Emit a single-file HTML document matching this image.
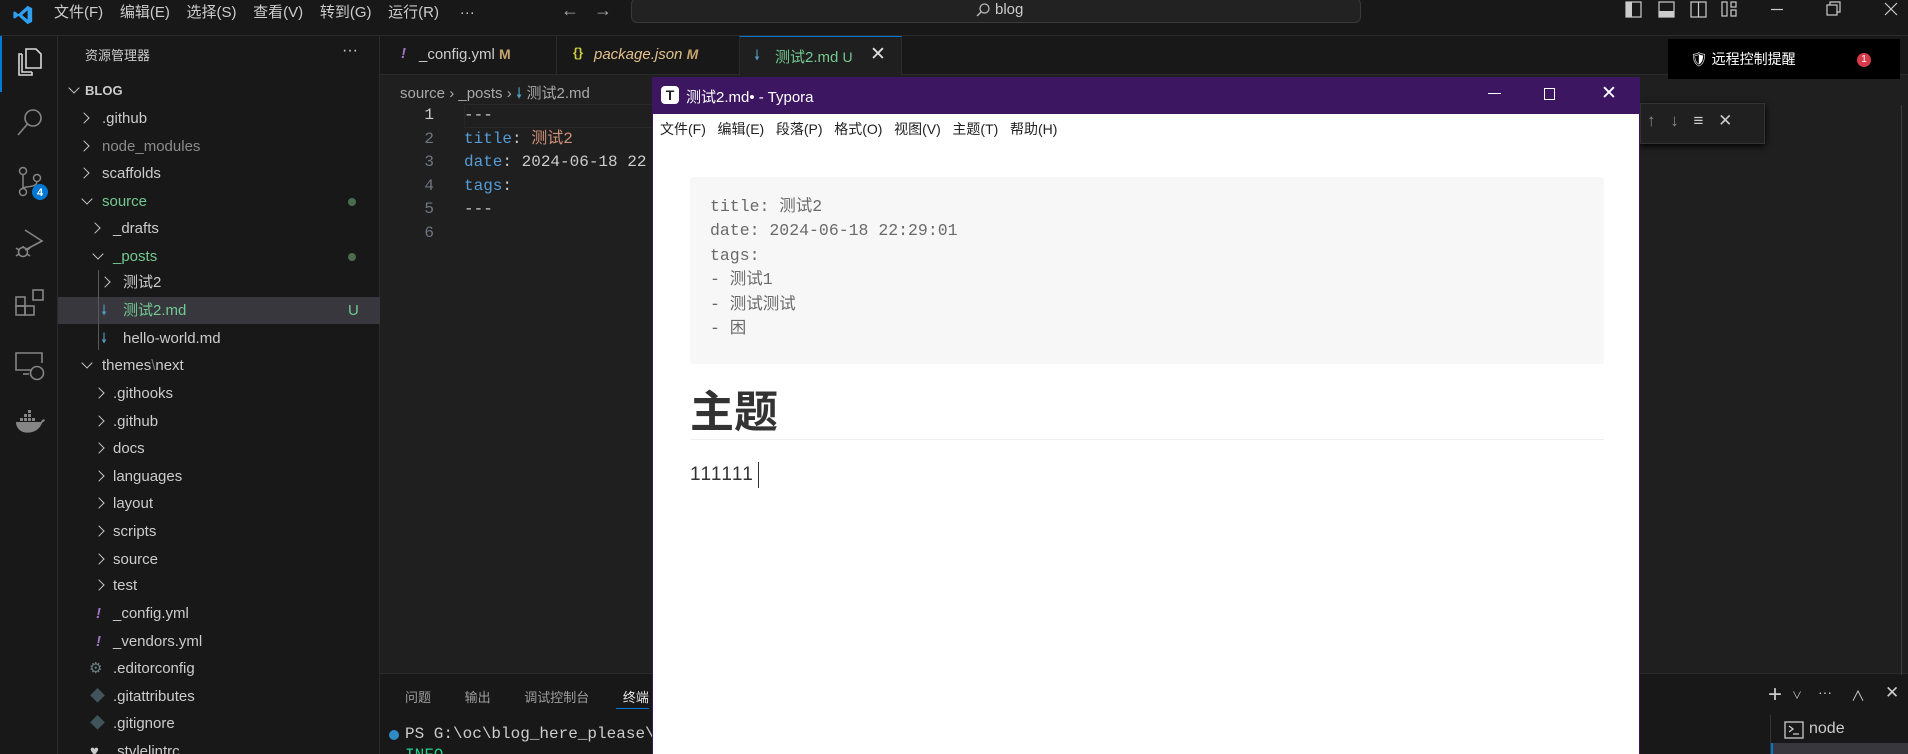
<!DOCTYPE html>
<html><head><meta charset="utf-8"><style>
*{margin:0;padding:0;box-sizing:border-box}
html,body{width:1908px;height:754px;overflow:hidden}
body{background:#1f1f1f;font-family:"Liberation Sans","Noto Sans CJK SC",sans-serif;color:#ccc;position:relative}
.a{position:absolute;white-space:nowrap}
.mono{font-family:"Liberation Mono","Noto Sans CJK SC",monospace}
.row{position:absolute;left:58px;width:322px;height:27px;font-size:15px;line-height:27px;color:#ccc}
.row span{position:absolute}
.row span.r{top:9px;width:8px;height:8px;border-right:1.3px solid #c5c5c5;border-bottom:1.3px solid #c5c5c5;transform:rotate(-45deg)}
.row span.d{top:7px;width:8px;height:8px;border-right:1.3px solid #c5c5c5;border-bottom:1.3px solid #c5c5c5;transform:rotate(45deg)}
svg{position:absolute}
</style></head><body>
<!-- title bar -->
<div class="a" style="left:0;top:0;width:1908px;height:36px;background:#181818;border-bottom:1px solid #2b2b2b"></div>
<svg style="left:12px;top:4px" width="22" height="22" viewBox="0 0 24 24"><path d="M17 2 L22 4.5 V19.5 L17 22 L7 13 L3 16 L1.5 15 V9 L3 8 L7 11 L17 2Z M17 7 L11 12 L17 17Z" fill="#2f9ff0" fill-rule="evenodd"/></svg>
<div class="a" style="left:54px;top:2px;font-size:15px;line-height:22px;color:#ccc">文件(F)&nbsp;&nbsp;&nbsp; 编辑(E)&nbsp;&nbsp;&nbsp; 选择(S)&nbsp;&nbsp;&nbsp; 查看(V)&nbsp;&nbsp;&nbsp; 转到(G)&nbsp;&nbsp;&nbsp; 运行(R)&nbsp;&nbsp;&nbsp;&nbsp; ···</div>
<div class="a" style="left:561px;top:0px;font-size:18px;color:#aaa">←&nbsp;&nbsp; →</div>
<div class="a" style="left:631px;top:-2px;width:730px;height:25px;background:#222;border:1px solid #3a3a3a;border-radius:6px"></div>
<svg style="left:975px;top:2px" width="16" height="16" viewBox="0 0 16 16"><circle cx="9.5" cy="6.5" r="4.5" fill="none" stroke="#bbb" stroke-width="1.3"/><path d="M6.3 9.7 L2 14" stroke="#bbb" stroke-width="1.4"/></svg>
<div class="a" style="left:995px;top:1px;font-size:15px;color:#ccc">blog</div>
<svg style="left:1625px;top:0" width="283" height="24" viewBox="0 0 283 24"><g fill="none" stroke="#ccc" stroke-width="1.2"><rect x="1" y="2" width="15" height="15"/><rect x="34" y="2" width="15" height="15"/><rect x="66" y="2" width="15" height="15"/><path d="M73.5 2V17"/><rect x="97" y="2" width="5" height="14"/><rect x="106" y="2" width="5" height="5"/><rect x="106" y="10" width="5" height="6"/><path d="M146 9.5H158"/><rect x="202" y="5" width="10" height="10"/><path d="M205 5V2H215V12H212"/><path d="M260 3L272 15M272 3L260 15"/></g><rect x="1" y="2" width="6" height="15" fill="#ccc"/><rect x="34" y="11" width="15" height="6" fill="#ccc"/></svg>
<!-- activity bar -->
<div class="a" style="left:0;top:36px;width:58px;height:718px;background:#181818;border-right:1px solid #2b2b2b"></div>
<div class="a" style="left:0;top:36px;width:2px;height:56px;background:#0078d4"></div>
<svg style="left:15px;top:46px" width="30" height="32" viewBox="0 0 30 32"><g fill="none" stroke="#d7d7d7" stroke-width="1.6"><path d="M11 3H21L26 8V22H11Z"/><path d="M7 8H4V29H17V26"/><path d="M7 8V26H17"/></g></svg>
<svg style="left:15px;top:106px" width="30" height="32" viewBox="0 0 30 32"><g fill="none" stroke="#858585" stroke-width="1.6"><circle cx="18" cy="12" r="8"/><path d="M12.5 18L3 29"/></g></svg>
<svg style="left:15px;top:166px" width="40" height="36" viewBox="0 0 40 36"><g fill="none" stroke="#858585" stroke-width="1.5"><circle cx="8" cy="5" r="3.5"/><circle cx="8" cy="26" r="3.5"/><circle cx="22" cy="12" r="3.5"/><path d="M8 8.5V22.5M22 15.5C22 22 10 20 8 22"/></g><circle cx="25" cy="26" r="8" fill="#0078d4"/><text x="25" y="30" font-size="11" font-weight="bold" fill="#fff" text-anchor="middle" font-family="Liberation Sans">4</text></svg>
<svg style="left:13px;top:228px" width="34" height="32" viewBox="0 0 34 32"><g fill="none" stroke="#858585" stroke-width="1.6"><path d="M12 2L29 13L12 22"/><circle cx="10" cy="24" r="4.5"/><path d="M3 20L6 22M3 28L6 26M17 20L14 22M17 28L14 26M10 19.5V18"/></g></svg>
<svg style="left:14px;top:288px" width="32" height="32" viewBox="0 0 32 32"><g fill="none" stroke="#858585" stroke-width="1.6"><rect x="2" y="9" width="9" height="9"/><rect x="2" y="18" width="9" height="9"/><rect x="11" y="18" width="9" height="9"/><rect x="19" y="2" width="10" height="10"/></g></svg>
<svg style="left:14px;top:350px" width="32" height="32" viewBox="0 0 32 32"><g fill="none" stroke="#858585" stroke-width="1.6"><path d="M18 20H2V3H28V13"/><path d="M9 24H15"/><circle cx="23" cy="23" r="6.5"/></g></svg>
<svg style="left:14px;top:410px" width="32" height="26" viewBox="0 0 32 26"><path d="M2 12H27C28 9 30 9 31 10C30 12 29 12 28 13C25 21 17 24 9 22C4 20 2 16 2 12Z" fill="#858585"/><g fill="#858585"><rect x="6" y="8" width="3" height="3"/><rect x="10" y="8" width="3" height="3"/><rect x="14" y="8" width="3" height="3"/><rect x="10" y="4" width="3" height="3"/><rect x="14" y="4" width="3" height="3"/><rect x="14" y="0" width="3" height="3"/><rect x="18" y="8" width="3" height="3"/></g></svg>
<!-- sidebar -->
<div class="a" style="left:58px;top:36px;width:322px;height:718px;background:#181818;border-right:1px solid #2b2b2b"></div>
<div class="a" style="left:85px;top:45px;font-size:13px;color:#ccc">资源管理器</div>
<div class="a" style="left:342px;top:42px;font-size:16px;color:#ccc">···</div>
<div class="a" style="left:58px;top:297px;width:322px;height:27px;background:#37373d"></div>
<div class="a" style="left:98px;top:270px;width:1px;height:80px;background:#585858"></div>
<div class="row" style="top:77px"><span class="d" style="left:12px"></span><span style="left:27px;font-weight:bold;font-size:13px">BLOG</span></div>
<div class="row" style="top:105px"><span class="r" style="left:22px"></span><span style="left:44px">.github</span></div>
<div class="row" style="top:133px;color:#8c8c8c"><span class="r" style="left:22px"></span><span style="left:44px">node_modules</span></div>
<div class="row" style="top:160px"><span class="r" style="left:22px"></span><span style="left:44px">scaffolds</span></div>
<div class="row" style="top:188px;color:#73c991"><span class="d" style="left:25px"></span><span style="left:44px">source</span><span style="left:290px;top:10px;width:8px;height:8px;border-radius:4px;background:#4b6d4f"></span></div>
<div class="row" style="top:215px"><span class="r" style="left:33px"></span><span style="left:55px">_drafts</span></div>
<div class="row" style="top:243px;color:#73c991"><span class="d" style="left:36px"></span><span style="left:55px">_posts</span><span style="left:290px;top:10px;width:8px;height:8px;border-radius:4px;background:#4b6d4f"></span></div>
<div class="row" style="top:269px"><span class="r" style="left:43px"></span><span style="left:65px">测试2</span></div>
<div class="row" style="top:297px;color:#73c991"><span style="left:43px;color:#519aba;font-size:14px">🠗</span><span style="left:65px">测试2.md</span><span style="left:290px">U</span></div>
<div class="row" style="top:325px"><span style="left:43px;color:#519aba;font-size:14px">🠗</span><span style="left:65px">hello-world.md</span></div>
<div class="row" style="top:352px"><span class="d" style="left:25px"></span><span style="left:44px">themes<span style="position:static;color:#777">\</span>next</span></div>
<div class="row" style="top:380px"><span class="r" style="left:37px"></span><span style="left:55px">.githooks</span></div>
<div class="row" style="top:408px"><span class="r" style="left:37px"></span><span style="left:55px">.github</span></div>
<div class="row" style="top:435px"><span class="r" style="left:37px"></span><span style="left:55px">docs</span></div>
<div class="row" style="top:463px"><span class="r" style="left:37px"></span><span style="left:55px">languages</span></div>
<div class="row" style="top:490px"><span class="r" style="left:37px"></span><span style="left:55px">layout</span></div>
<div class="row" style="top:518px"><span class="r" style="left:37px"></span><span style="left:55px">scripts</span></div>
<div class="row" style="top:546px"><span class="r" style="left:37px"></span><span style="left:55px">source</span></div>
<div class="row" style="top:572px"><span class="r" style="left:37px"></span><span style="left:55px">test</span></div>
<div class="row" style="top:600px"><span style="left:38px;color:#a074c4;font-weight:bold;font-style:italic">!</span><span style="left:55px">_config.yml</span></div>
<div class="row" style="top:628px"><span style="left:38px;color:#a074c4;font-weight:bold;font-style:italic">!</span><span style="left:55px">_vendors.yml</span></div>
<div class="row" style="top:655px"><span style="left:31px;color:#6d8086">⚙</span><span style="left:55px">.editorconfig</span></div>
<div class="row" style="top:683px"><span style="left:32px;color:#41535b">◆</span><span style="left:55px">.gitattributes</span></div>
<div class="row" style="top:710px"><span style="left:32px;color:#41535b">◆</span><span style="left:55px">.gitignore</span></div>
<div class="row" style="top:738px"><span style="left:32px;color:#ccc">♥</span><span style="left:55px">.stylelintrc</span></div>
<!-- tabs -->
<div class="a" style="left:380px;top:36px;width:1528px;height:39px;background:#181818;border-bottom:1px solid #2b2b2b"></div>
<div class="a" style="left:556px;top:36px;width:1px;height:39px;background:#2b2b2b"></div>
<div class="a" style="left:739px;top:36px;width:163px;height:40px;background:#1f1f1f;border-top:1px solid #0078d4;border-left:1px solid #2b2b2b;border-right:1px solid #2b2b2b"></div>
<div class="a" style="left:401px;top:45px;font-size:15px;color:#a074c4;font-weight:bold;font-style:italic">!</div>
<div class="a" style="left:419px;top:46px;font-size:15px;color:#ccc">_config.yml <b style="color:#c5a46e;font-size:14px">M</b></div>
<div class="a" style="left:573px;top:45px;font-size:13px;color:#cbcb41;font-weight:bold">{}</div>
<div class="a" style="left:594px;top:46px;font-size:15px;color:#e2c08d;font-style:italic">package.json <b style="font-size:14px;color:#c5a46e">M</b></div>
<div class="a" style="left:754px;top:45px;font-size:14px;color:#519aba">🠗</div>
<div class="a" style="left:775px;top:46px;font-size:15px;color:#73c991">测试2.md <b style="font-weight:normal;font-size:14px">U</b></div>
<div class="a" style="left:870px;top:43px;font-size:19px;color:#ddd">✕</div>
<!-- breadcrumb & editor -->
<div class="a" style="left:400px;top:82px;font-size:15px;color:#a9a9a9">source › _posts › <span style="color:#519aba">🠗</span> 测试2.md</div>
<div class="a" style="left:464px;top:104px;width:200px;height:24px;border:1px solid #282828"></div>
<div class="a mono" style="left:420px;top:104px;font-size:16px;line-height:23.5px;color:#6e7681;text-align:right;width:14px"><span style="color:#ccc">1</span><br>2<br>3<br>4<br>5<br>6</div>
<div class="a mono" style="left:464px;top:104px;font-size:16px;line-height:23.5px;color:#ccc">---<br><span style="color:#569cd6">title</span>: <span style="color:#ce9178">测试2</span><br><span style="color:#569cd6">date</span>: 2024-06-18 22<br><span style="color:#569cd6">tags</span>:<br>---</div>
<!-- panel -->
<div class="a" style="left:380px;top:673px;width:1528px;height:81px;background:#181818;border-top:1px solid #2b2b2b"></div>
<div class="a" style="left:405px;top:687px;font-size:13px;color:#9d9d9d;word-spacing:30px">问题 输出 调试控制台 <span style="color:#e7e7e7">终端</span></div>
<div class="a" style="left:616px;top:708px;width:33px;height:1px;background:#0078d4"></div>
<div class="a" style="left:389px;top:730px;width:10px;height:10px;border-radius:5px;background:#2f8ac5"></div>
<div class="a mono" style="left:405px;top:725px;font-size:16px;color:#ccc">PS G:\oc\blog_here_please\</div>
<div class="a mono" style="left:405px;top:746px;font-size:16px;color:#23d18b">INFO</div>
<div class="a" style="left:1768px;top:681px;font-size:24px;color:#ccc">+</div>
<div class="a" style="left:1792px;top:687px;font-size:10px;color:#ccc">∨</div>
<div class="a" style="left:1818px;top:684px;font-size:14px;color:#ccc">···</div>
<div class="a" style="left:1851px;top:686px;font-size:14px;color:#ccc">∧</div>
<div class="a" style="left:1885px;top:683px;font-size:17px;color:#ccc">✕</div>
<div class="a" style="left:1770px;top:715px;width:1px;height:39px;background:#333"></div>
<div class="a" style="left:1771px;top:743px;width:137px;height:11px;background:#37373d;border-left:2px solid #0078d4"></div>
<svg style="left:1784px;top:721px" width="20" height="18" viewBox="0 0 20 18"><rect x="1" y="1" width="18" height="16" fill="none" stroke="#ccc" stroke-width="1.3"/><path d="M5 5L9 8L5 11M9 13H15" fill="none" stroke="#ccc" stroke-width="1.3"/></svg>
<div class="a" style="left:1809px;top:720px;font-size:16px;color:#ccc">node</div>
<!-- find widget & notif -->
<div class="a" style="left:1640px;top:103px;width:125px;height:41px;background:#202020;box-shadow:0 2px 6px #000;border:1px solid #333"></div>
<div class="a" style="left:1647px;top:111px;font-size:17px;color:#888;word-spacing:10px">↑ ↓ <span style="color:#ccc">≡ ✕</span></div>
<div class="a" style="left:1901px;top:105px;width:1px;height:570px;background:#3c3c3c"></div>
<div class="a" style="left:1668px;top:39px;width:232px;height:40px;background:#000"></div>
<div class="a" style="left:1690px;top:49px;font-size:14px;color:#fff">🛡 远程控制提醒</div>
<div class="a" style="left:1857px;top:53px;width:14px;height:14px;border-radius:7px;background:#d73a4a;color:#fff;font-size:10px;text-align:center;line-height:14px">1</div>
<!-- typora -->
<div class="a" style="left:652px;top:77px;width:988px;height:677px;background:#fff;border-left:1px solid #3c1661;border-right:1px solid #3c1661"></div>
<div class="a" style="left:652px;top:77px;width:988px;height:37px;background:#3c1661"></div>
<div class="a" style="left:661px;top:86px;width:18px;height:18px;background:#fff;border-radius:4px;color:#222;font-size:14px;font-weight:bold;text-align:center;line-height:18px">T</div>
<div class="a" style="left:686px;top:86px;font-size:15px;color:#fff">测试2.md• - Typora</div>
<div class="a" style="left:1488px;top:93px;width:13px;height:1px;background:#fff"></div>
<div class="a" style="left:1544px;top:88px;width:11px;height:12px;border:1px solid #fff"></div>
<div class="a" style="left:1601px;top:82px;font-size:19px;color:#fff">✕</div>
<div class="a" style="left:660px;top:119px;font-size:14px;color:#222">文件(F)&nbsp;&nbsp; 编辑(E)&nbsp;&nbsp; 段落(P)&nbsp;&nbsp; 格式(O)&nbsp;&nbsp; 视图(V)&nbsp;&nbsp; 主题(T)&nbsp;&nbsp; 帮助(H)</div>
<div class="a" style="left:690px;top:177px;width:914px;height:187px;background:#f7f7f7;border-radius:3px"></div>
<div class="a mono" style="left:710px;top:195px;font-size:16.5px;line-height:24.4px;color:#6a6a6a">title: 测试2<br>date: 2024-06-18 22:29:01<br>tags:<br>- 测试1<br>- 测试测试<br>- 困</div>
<div class="a" style="left:690px;top:385px;font-size:44px;font-weight:bold;color:#333;line-height:56px">主题</div>
<div class="a" style="left:690px;top:439px;width:914px;height:1px;background:#eee"></div>
<div class="a" style="left:690px;top:464px;font-size:19px;color:#333;letter-spacing:1.3px">111111</div>
<div class="a" style="left:758px;top:462px;width:1px;height:26px;background:#333"></div>
</body></html>
